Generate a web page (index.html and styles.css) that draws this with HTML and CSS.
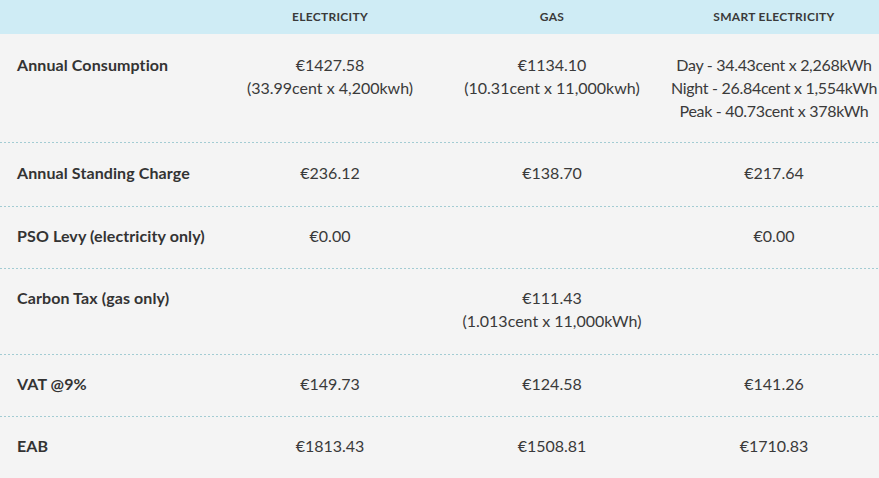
FILE: index.html
```html
<!DOCTYPE html>
<html>
<head>
<meta charset="utf-8">
<link rel="stylesheet" href="styles.css">
</head>
<body>
<div class="wrap">
  <div class="table">
    <div class="row head">
      <div class="cell"></div>
      <div class="cell">ELECTRICITY</div>
      <div class="cell">GAS</div>
      <div class="cell">SMART ELECTRICITY</div>
    </div>
    <div class="row r1">
      <div class="cell label">Annual Consumption</div>
      <div class="cell">€1427.58<br>(33.99cent x 4,200kwh)</div>
      <div class="cell">€1134.10<br>(10.31cent x 11,000kwh)</div>
      <div class="cell tight">Day - 34.43cent x 2,268kWh<br>Night - 26.84cent x 1,554kWh<br>Peak - 40.73cent x 378kWh</div>
    </div>
    <div class="row r2">
      <div class="cell label">Annual Standing Charge</div>
      <div class="cell">€236.12</div>
      <div class="cell">€138.70</div>
      <div class="cell">€217.64</div>
    </div>
    <div class="row">
      <div class="cell label">PSO Levy (electricity only)</div>
      <div class="cell">€0.00</div>
      <div class="cell"></div>
      <div class="cell">€0.00</div>
    </div>
    <div class="row r4">
      <div class="cell label">Carbon Tax (gas only)</div>
      <div class="cell"></div>
      <div class="cell">€111.43<br>(1.013cent x 11,000kWh)</div>
      <div class="cell"></div>
    </div>
    <div class="row">
      <div class="cell label">VAT @9%</div>
      <div class="cell">€149.73</div>
      <div class="cell">€124.58</div>
      <div class="cell">€141.26</div>
    </div>
    <div class="row">
      <div class="cell label">EAB</div>
      <div class="cell">€1813.43</div>
      <div class="cell">€1508.81</div>
      <div class="cell">€1710.83</div>
    </div>
  </div>
</div>
</body>
</html>
```
FILE: styles.css
```css
html, body {
  margin: 0;
  padding: 0;
  background: #f4f4f4;
}
body {
  font-family: "Lato", "Open Sans", sans-serif;
  color: #333;
  overflow: hidden;
}
.wrap {
  width: 879px;
  height: 478px;
  overflow: hidden;
}
.table {
  width: 885px;
}
.row {
  display: grid;
  grid-template-columns: 219px 222px 222px 222px;
  padding: 17px 0 22px;
  font-size: 16px;
  line-height: 23px;
  background-image: repeating-linear-gradient(90deg, #a3ccd3 0 2px, transparent 2px 4px);
  background-size: 100% 1px;
  background-repeat: no-repeat;
  background-position: left bottom;
}
.row:last-child {
  background-image: none;
}
.row.head {
  background: #cfecf5;
  padding: 0;
  height: 34px;
  line-height: 34px;
  font-size: 12px;
  font-weight: 700;
  letter-spacing: 0.3px;
  color: #333;
}
.row.r1 {
  padding-top: 19px;
  padding-bottom: 21px;
}
.row.r2 {
  padding-top: 18px;
  padding-bottom: 23px;
}
.row.r4 {
  padding-top: 17px;
  padding-bottom: 23px;
}
.cell {
  text-align: center;
  color: #3a3a3a;
}
.cell.tight {
  letter-spacing: -0.3px;
  white-space: nowrap;
}
.cell.label {
  text-align: left;
  padding-left: 17px;
  font-weight: 700;
  color: #333;
  letter-spacing: 0.1px;
}
```
